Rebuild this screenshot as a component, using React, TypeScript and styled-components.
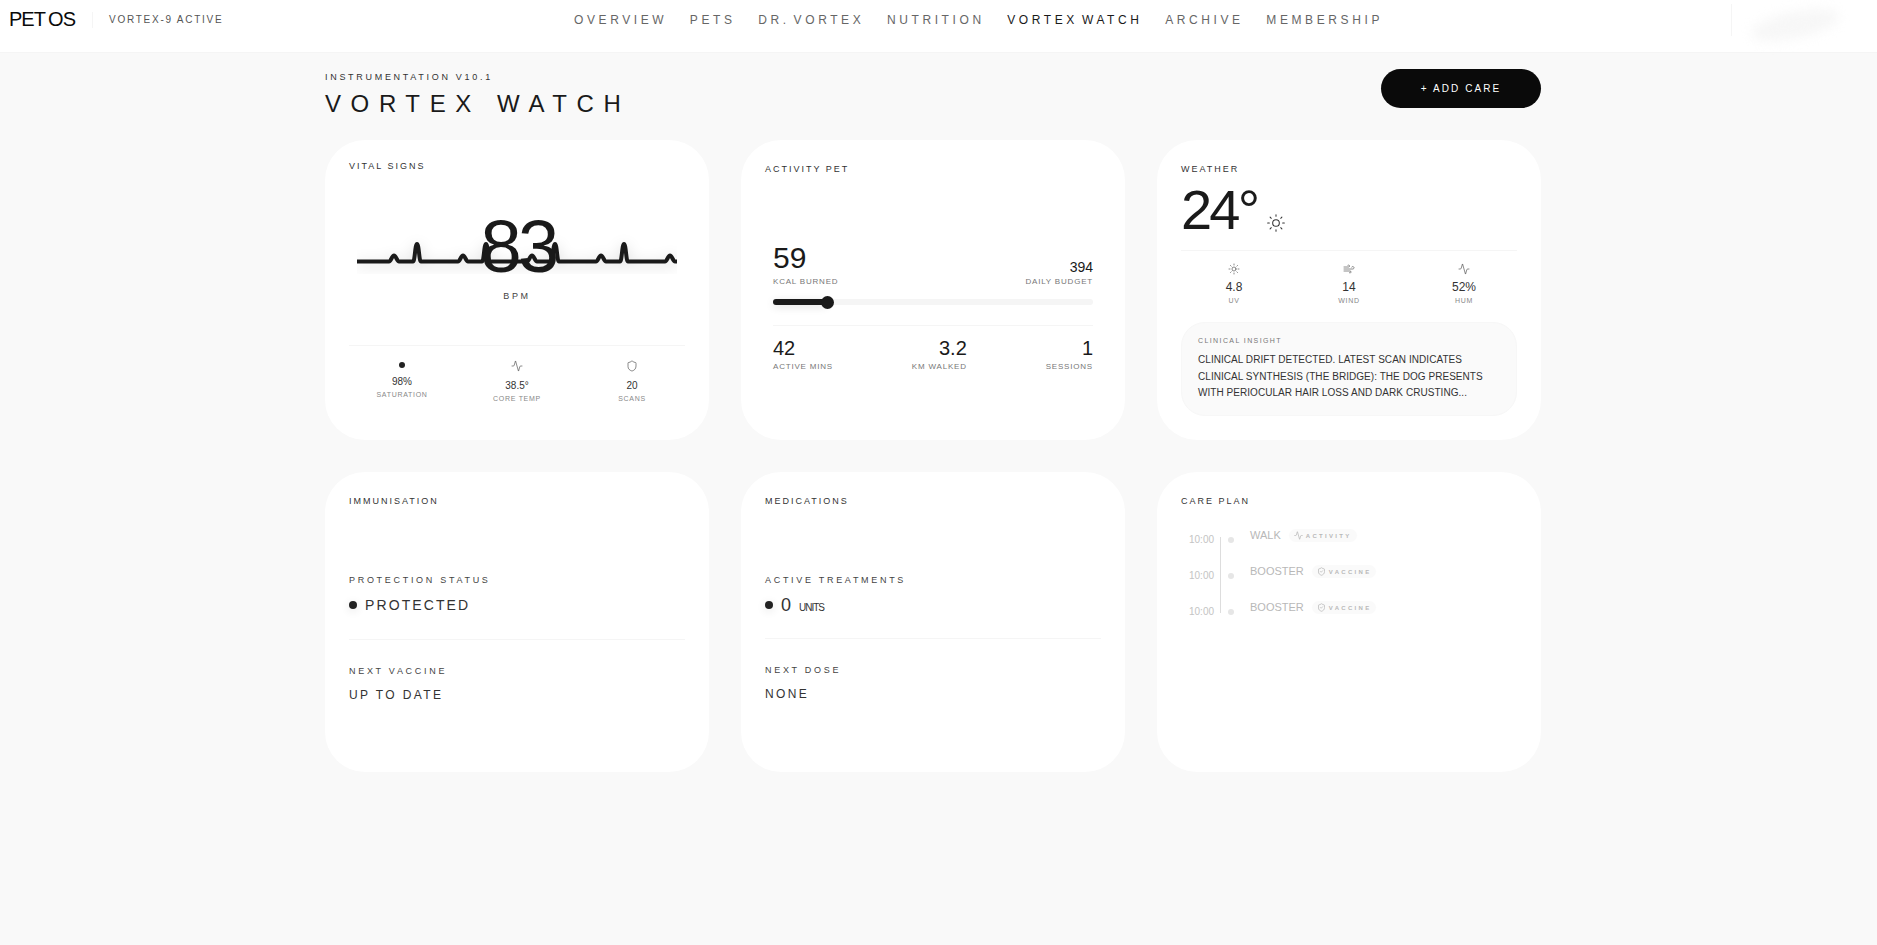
import React from 'react';
import styled, { createGlobalStyle } from 'styled-components';
import { Activity, Shield, ShieldCheck, Sun, Wind } from 'lucide-react';

const GlobalStyle = createGlobalStyle`
  html, body {
    margin: 0;
    padding: 0;
    background: #f9f9f9;
    overflow: hidden;
  }
  body {
    font-family: 'Liberation Sans', Arial, sans-serif;
    color: #1a1a1a;
  }
  * { box-sizing: border-box; }
`;

const Page = styled.div`
  height: 945px;
  overflow: hidden;
`;

const Header = styled.header`
  display: flex;
  align-items: center;
  height: 53px;
  padding: 0 0 13px 9px;
  background: #fff;
  border-bottom: 1px solid #f5f5f5;
`;

const Brand = styled.div`
  display: flex;
  align-items: center;
  width: 565px;
`;

const Logo = styled.div`
  font-size: 20px;
  letter-spacing: -0.05em;
  word-spacing: -1px;
  color: #0a0a0a;
`;

const BrandDivider = styled.span`
  width: 1px;
  height: 16px;
  margin: 0 16px 0 17px;
  background: #f5f5f5;
`;

const SystemStatus = styled.span`
  font-size: 10px;
  letter-spacing: 1.75px;
  color: #555;
`;

const Nav = styled.nav`
  display: flex;
  gap: 22.6px;
`;

const NavLink = styled.a<{ $active?: boolean }>`
  font-size: 12px;
  letter-spacing: 0.3em;
  word-spacing: -3px;
  color: ${(p) => (p.$active ? '#1a1a1a' : '#666')};
`;

const UserArea = styled.div`
  display: flex;
  align-items: center;
  flex: none;
  width: 146px;
  height: 32px;
  margin-left: auto;
  padding-left: 18px;
  border-left: 1px solid #f5f5f5;
`;

const BlurredUser = styled.div`
  width: 90px;
  height: 26px;
  border-radius: 50%;
  background: #f7f7f7;
  filter: blur(6px);
  transform: translateY(5px) rotate(-12deg);
`;

const Main = styled.main`
  width: 1216px;
  margin-left: 325px;
  padding-top: 18px;
`;

const TitleRow = styled.div`
  display: flex;
  justify-content: space-between;
  align-items: flex-start;
  height: 69px;
`;

const Eyebrow = styled.div`
  font-size: 9px;
  line-height: 12px;
  letter-spacing: 0.3em;
  color: #333;
`;

const PageTitle = styled.h1`
  margin: 7px 0 0;
  font-size: 24px;
  line-height: 28px;
  font-weight: 400;
  letter-spacing: 0.4em;
  color: #1a1a1a;
`;

const AddButton = styled.button`
  width: 160px;
  height: 39px;
  margin-top: -2px;
  border: none;
  border-radius: 999px;
  background: #0a0a0a;
  color: #fff;
  font-family: 'Liberation Sans', Arial, sans-serif;
  font-size: 10px;
  letter-spacing: 2.1px;
`;

const Grid = styled.div`
  display: grid;
  grid-template-columns: repeat(3, 384px);
  grid-auto-rows: 300px;
  gap: 32px;
`;

const Card = styled.section<{ $top?: number }>`
  position: relative;
  padding: ${(p) => p.$top ?? 23}px 24px 0;
  border-radius: 40px;
  background: #fff;
  box-shadow: 0 1px 2px rgba(0, 0, 0, 0.005);
`;

const CardLabel = styled.div`
  font-size: 9px;
  line-height: 12px;
  letter-spacing: 2px;
  color: #333;
`;

const Hero = styled.div`
  position: relative;
  display: flex;
  flex-direction: column;
  align-items: center;
  margin-top: 39px;
`;

const EcgSvg = styled.svg`
  position: absolute;
  left: 8px;
  top: 23px;
`;

const EcgPath = styled.path`
  fill: none;
  stroke: #1a1a1a;
  stroke-width: 4;
  stroke-linejoin: round;
  filter: drop-shadow(0 3px 7px rgba(0, 0, 0, 0.16));
`;

const BigNumber = styled.div`
  position: relative;
  left: 1px;
  height: 72px;
  font-size: 74px;
  line-height: 72px;
  letter-spacing: -0.05em;
  color: #1a1a1a;
`;

const HeroUnit = styled.div`
  margin-top: 8px;
  font-size: 9px;
  line-height: 10px;
  letter-spacing: 0.3em;
  color: #444;
`;

const StatsRow = styled.div<{ $mt: number; $pt: number }>`
  display: grid;
  grid-template-columns: repeat(3, 115px);
  justify-content: center;
  align-items: start;
  margin-top: ${(p) => p.$mt}px;
  padding-top: ${(p) => p.$pt}px;
  border-top: 1px solid #f5f5f5;
`;

const StatCell = styled.div`
  display: flex;
  flex-direction: column;
  align-items: center;
  color: #444;
`;

const StatIconSlot = styled.div`
  display: flex;
  justify-content: center;
  height: 14px;
`;

const StatDot = styled.span`
  width: 6px;
  height: 6px;
  margin: 2px 0;
  border-radius: 50%;
  background: #222;
`;

const StatValue = styled.div<{ $size: number }>`
  margin-top: 5px;
  font-size: ${(p) => p.$size}px;
  line-height: 14px;
  color: #333;
`;

const StatCaption = styled.div<{ $gap?: number }>`
  margin-top: ${(p) => p.$gap ?? 2}px;
  font-size: 7px;
  line-height: 8px;
  letter-spacing: 0.1em;
  color: #888;
`;

const ActivityBody = styled.div`
  margin-top: 68px;
  padding: 0 8px;
`;

const BudgetRow = styled.div`
  display: flex;
  justify-content: space-between;
  align-items: flex-end;
`;

const Metric = styled.div<{ $right?: boolean }>`
  text-align: ${(p) => (p.$right ? 'right' : 'left')};
`;

const MetricValue = styled.div<{ $size: number }>`
  font-size: ${(p) => p.$size}px;
  line-height: 1;
  color: #1a1a1a;
`;

const MetricLabel = styled.div<{ $gap?: number }>`
  margin-top: ${(p) => p.$gap ?? 5}px;
  font-size: 8px;
  line-height: 8px;
  letter-spacing: 0.1em;
  color: #777;
`;

const Track = styled.div`
  position: relative;
  height: 6px;
  margin-top: 13px;
  border-radius: 3px;
  background: #f5f5f5;
`;

const TrackFill = styled.div`
  height: 100%;
  border-radius: 3px;
  background: #1a1a1a;
  box-shadow: 0 2px 8px rgba(0, 0, 0, 0.12);
`;

const TrackThumb = styled.span`
  position: absolute;
  top: -3.5px;
  width: 13px;
  height: 13px;
  margin-left: -6.5px;
  border-radius: 50%;
  background: #1a1a1a;
`;

const SessionRow = styled.div`
  display: flex;
  justify-content: space-between;
  margin-top: 20px;
  padding-top: 12px;
  border-top: 1px solid #f5f5f5;
`;

const TempRow = styled.div`
  display: flex;
  align-items: flex-end;
  gap: 9px;
  margin-top: 7px;
`;

const Temperature = styled.div`
  font-size: 56px;
  line-height: 56px;
  letter-spacing: -0.05em;
  color: #1a1a1a;
`;

const SunIcon = styled(Sun)`
  margin-bottom: 5px;
  color: #333;
`;

const InsightBox = styled.div`
  margin-top: 17px;
  height: 94px;
  padding: 13px 16px 0 16px;
  border: 1px solid #f7f7f7;
  border-radius: 24px;
  background: #fafafa;
`;

const InsightLabel = styled.div`
  font-size: 7px;
  line-height: 9px;
  letter-spacing: 0.2em;
  color: #777;
`;

const InsightText = styled.div`
  margin-top: 7px;
  font-size: 10px;
  line-height: 16.5px;
  letter-spacing: 0.05px;
  color: #333;
`;

const SubLabel = styled.div<{ $mt: number }>`
  margin-top: ${(p) => p.$mt}px;
  font-size: 9px;
  line-height: 12px;
  letter-spacing: 0.3em;
  color: #444;
`;

const StatusLine = styled.div`
  display: flex;
  align-items: center;
  gap: 8px;
  height: 20px;
  margin-top: 9px;
`;

const StatusDot = styled.span`
  width: 8px;
  height: 8px;
  border-radius: 50%;
  background: #222;
  box-shadow: 0 2px 10px rgba(0, 0, 0, 0.12);
`;

const StatusText = styled.span`
  font-size: 14px;
  letter-spacing: 0.15em;
  color: #333;
`;

const CountText = styled.span`
  font-size: 18px;
  color: #333;
`;

const CountUnit = styled.span`
  margin-top: 4px;
  font-size: 10px;
  letter-spacing: -0.1em;
  color: #333;
`;

const SectionDivider = styled.div<{ $mt: number }>`
  margin-top: ${(p) => p.$mt}px;
  padding-top: 25px;
  border-top: 1px solid #f5f5f5;
`;

const NextValue = styled.div`
  margin-top: 10px;
  font-size: 12px;
  line-height: 16px;
  letter-spacing: 0.2em;
  color: #333;
`;

const Timeline = styled.div`
  position: relative;
  display: flex;
  flex-direction: column;
  gap: 18px;
  margin-top: 19px;
  padding-left: 8px;

  &::before {
    content: '';
    position: absolute;
    left: 39px;
    top: 11px;
    width: 1px;
    height: 76px;
    background: #ddd;
  }
`;

const PlanRow = styled.div`
  display: flex;
  align-items: flex-start;
  height: 18px;
`;

const PlanTime = styled.div`
  width: 24px;
  margin-top: 7.5px;
  font-size: 10px;
  line-height: 12px;
  color: #c4c4c4;
`;

const PlanDot = styled.span`
  width: 6px;
  height: 6px;
  margin: 11px 16px 0 15px;
  border-radius: 50%;
  background: #e6e6e6;
`;

const PlanName = styled.div`
  font-size: 11px;
  line-height: 18px;
  color: #b8b8b8;
`;

const PlanTag = styled.span`
  display: inline-flex;
  align-items: center;
  gap: 3px;
  height: 13px;
  margin: 3px 0 0 8px;
  padding: 0 5px;
  border-radius: 7px;
  background: #fafafa;
  color: #b8b8b8;
  font-size: 6px;
  font-weight: 700;
  letter-spacing: 2.3px;
`;

// repeating beat: a small bump then a tall rounded spike, 69px apart
const ecgPath = () => {
  const base = 27.5;
  let d = `M0 ${base}`;
  for (let i = 0; i < 5; i++) {
    const x = i * 69;
    if (x + 37 > 320) break;
    d += ` L${x + 32} ${base} C${x + 34} ${base} ${x + 35} ${base - 6} ${x + 37} ${base - 6} C${x + 39} ${base - 6} ${x + 40} ${base} ${x + 42} ${base}`;
    if (x + 60 > 320) break;
    d += ` L${x + 56} ${base} C${x + 58} ${base} ${x + 58} ${base - 17.5} ${x + 60} ${base - 17.5} C${x + 62} ${base - 17.5} ${x + 62} ${base} ${x + 64} ${base}`;
  }
  return d + ` L320 ${base}`;
};

const iconProps = { strokeWidth: 1.25 };

const App: React.FC = () => {
  return (
    <Page>
      <GlobalStyle />
      <Header>
        <Brand>
          <Logo>PET OS</Logo>
          <BrandDivider />
          <SystemStatus>VORTEX-9 ACTIVE</SystemStatus>
        </Brand>
        <Nav>
          {['OVERVIEW', 'PETS', 'DR. VORTEX', 'NUTRITION', 'VORTEX WATCH', 'ARCHIVE', 'MEMBERSHIP'].map((item) => (
            <NavLink key={item} $active={item === 'VORTEX WATCH'}>
              {item}
            </NavLink>
          ))}
        </Nav>
        <UserArea>
          <BlurredUser />
        </UserArea>
      </Header>

      <Main>
        <TitleRow>
          <div>
            <Eyebrow>INSTRUMENTATION V10.1</Eyebrow>
            <PageTitle>VORTEX WATCH</PageTitle>
          </div>
          <AddButton>+ ADD CARE</AddButton>
        </TitleRow>

        <Grid>
          <Card $top={20}>
            <CardLabel>VITAL SIGNS</CardLabel>
            <Hero>
              <EcgSvg width={320} height={40} viewBox="0 0 320 40">
                <EcgPath d={ecgPath()} />
              </EcgSvg>
              <BigNumber>83</BigNumber>
              <HeroUnit>BPM</HeroUnit>
            </Hero>
            <StatsRow $mt={44} $pt={14}>
              <StatCell>
                <StatDot />
                <StatValue $size={10}>98%</StatValue>
                <StatCaption>SATURATION</StatCaption>
              </StatCell>
              <StatCell>
                <StatIconSlot>
                  <Activity size={12} {...iconProps} />
                </StatIconSlot>
                <StatValue $size={10}>38.5°</StatValue>
                <StatCaption>CORE TEMP</StatCaption>
              </StatCell>
              <StatCell>
                <StatIconSlot>
                  <Shield size={12} {...iconProps} />
                </StatIconSlot>
                <StatValue $size={10}>20</StatValue>
                <StatCaption>SCANS</StatCaption>
              </StatCell>
            </StatsRow>
          </Card>

          <Card>
            <CardLabel>ACTIVITY PET</CardLabel>
            <ActivityBody>
              <BudgetRow>
                <Metric>
                  <MetricValue $size={30}>59</MetricValue>
                  <MetricLabel>KCAL BURNED</MetricLabel>
                </Metric>
                <Metric $right>
                  <MetricValue $size={14}>394</MetricValue>
                  <MetricLabel $gap={4}>DAILY BUDGET</MetricLabel>
                </Metric>
              </BudgetRow>
              <Track>
                <TrackFill style={{ width: `${(59 / 394) * 100 + 2}%` }} />
                <TrackThumb style={{ left: `${(59 / 394) * 100 + 2}%` }} />
              </Track>
              <SessionRow>
                <Metric>
                  <MetricValue $size={20}>42</MetricValue>
                  <MetricLabel>ACTIVE MINS</MetricLabel>
                </Metric>
                <Metric $right>
                  <MetricValue $size={20}>3.2</MetricValue>
                  <MetricLabel>KM WALKED</MetricLabel>
                </Metric>
                <Metric $right>
                  <MetricValue $size={20}>1</MetricValue>
                  <MetricLabel>SESSIONS</MetricLabel>
                </Metric>
              </SessionRow>
            </ActivityBody>
          </Card>

          <Card>
            <CardLabel>WEATHER</CardLabel>
            <TempRow>
              <Temperature>24°</Temperature>
              <SunIcon size={20} strokeWidth={1.25} />
            </TempRow>
            <StatsRow $mt={12} $pt={12}>
              <StatCell>
                <Sun size={12} {...iconProps} />
                <StatValue $size={12}>4.8</StatValue>
                <StatCaption $gap={3}>UV</StatCaption>
              </StatCell>
              <StatCell>
                <Wind size={12} {...iconProps} />
                <StatValue $size={12}>14</StatValue>
                <StatCaption $gap={3}>WIND</StatCaption>
              </StatCell>
              <StatCell>
                <Activity size={12} {...iconProps} />
                <StatValue $size={12}>52%</StatValue>
                <StatCaption $gap={3}>HUM</StatCaption>
              </StatCell>
            </StatsRow>
            <InsightBox>
              <InsightLabel>CLINICAL INSIGHT</InsightLabel>
              <InsightText>
                CLINICAL DRIFT DETECTED. LATEST SCAN INDICATES
                <br />
                CLINICAL SYNTHESIS (THE BRIDGE): THE DOG PRESENTS
                <br />
                WITH PERIOCULAR HAIR LOSS AND DARK CRUSTING...
              </InsightText>
            </InsightBox>
          </Card>

          <Card>
            <CardLabel>IMMUNISATION</CardLabel>
            <SubLabel $mt={67}>PROTECTION STATUS</SubLabel>
            <StatusLine>
              <StatusDot />
              <StatusText>PROTECTED</StatusText>
            </StatusLine>
            <SectionDivider $mt={24}>
              <SubLabel $mt={0}>NEXT VACCINE</SubLabel>
              <NextValue>UP TO DATE</NextValue>
            </SectionDivider>
          </Card>

          <Card>
            <CardLabel>MEDICATIONS</CardLabel>
            <SubLabel $mt={67}>ACTIVE TREATMENTS</SubLabel>
            <StatusLine>
              <StatusDot />
              <CountText>0</CountText>
              <CountUnit>UNITS</CountUnit>
            </StatusLine>
            <SectionDivider $mt={23}>
              <SubLabel $mt={0}>NEXT DOSE</SubLabel>
              <NextValue>NONE</NextValue>
            </SectionDivider>
          </Card>

          <Card>
            <CardLabel>CARE PLAN</CardLabel>
            <Timeline>
              <PlanRow>
                <PlanTime>10:00</PlanTime>
                <PlanDot />
                <PlanName>WALK</PlanName>
                <PlanTag>
                  <Activity size={9} /> ACTIVITY
                </PlanTag>
              </PlanRow>
              <PlanRow>
                <PlanTime>10:00</PlanTime>
                <PlanDot />
                <PlanName>BOOSTER</PlanName>
                <PlanTag>
                  <ShieldCheck size={9} /> VACCINE
                </PlanTag>
              </PlanRow>
              <PlanRow>
                <PlanTime>10:00</PlanTime>
                <PlanDot />
                <PlanName>BOOSTER</PlanName>
                <PlanTag>
                  <ShieldCheck size={9} /> VACCINE
                </PlanTag>
              </PlanRow>
            </Timeline>
          </Card>
        </Grid>
      </Main>
    </Page>
  );
};

export default App;
